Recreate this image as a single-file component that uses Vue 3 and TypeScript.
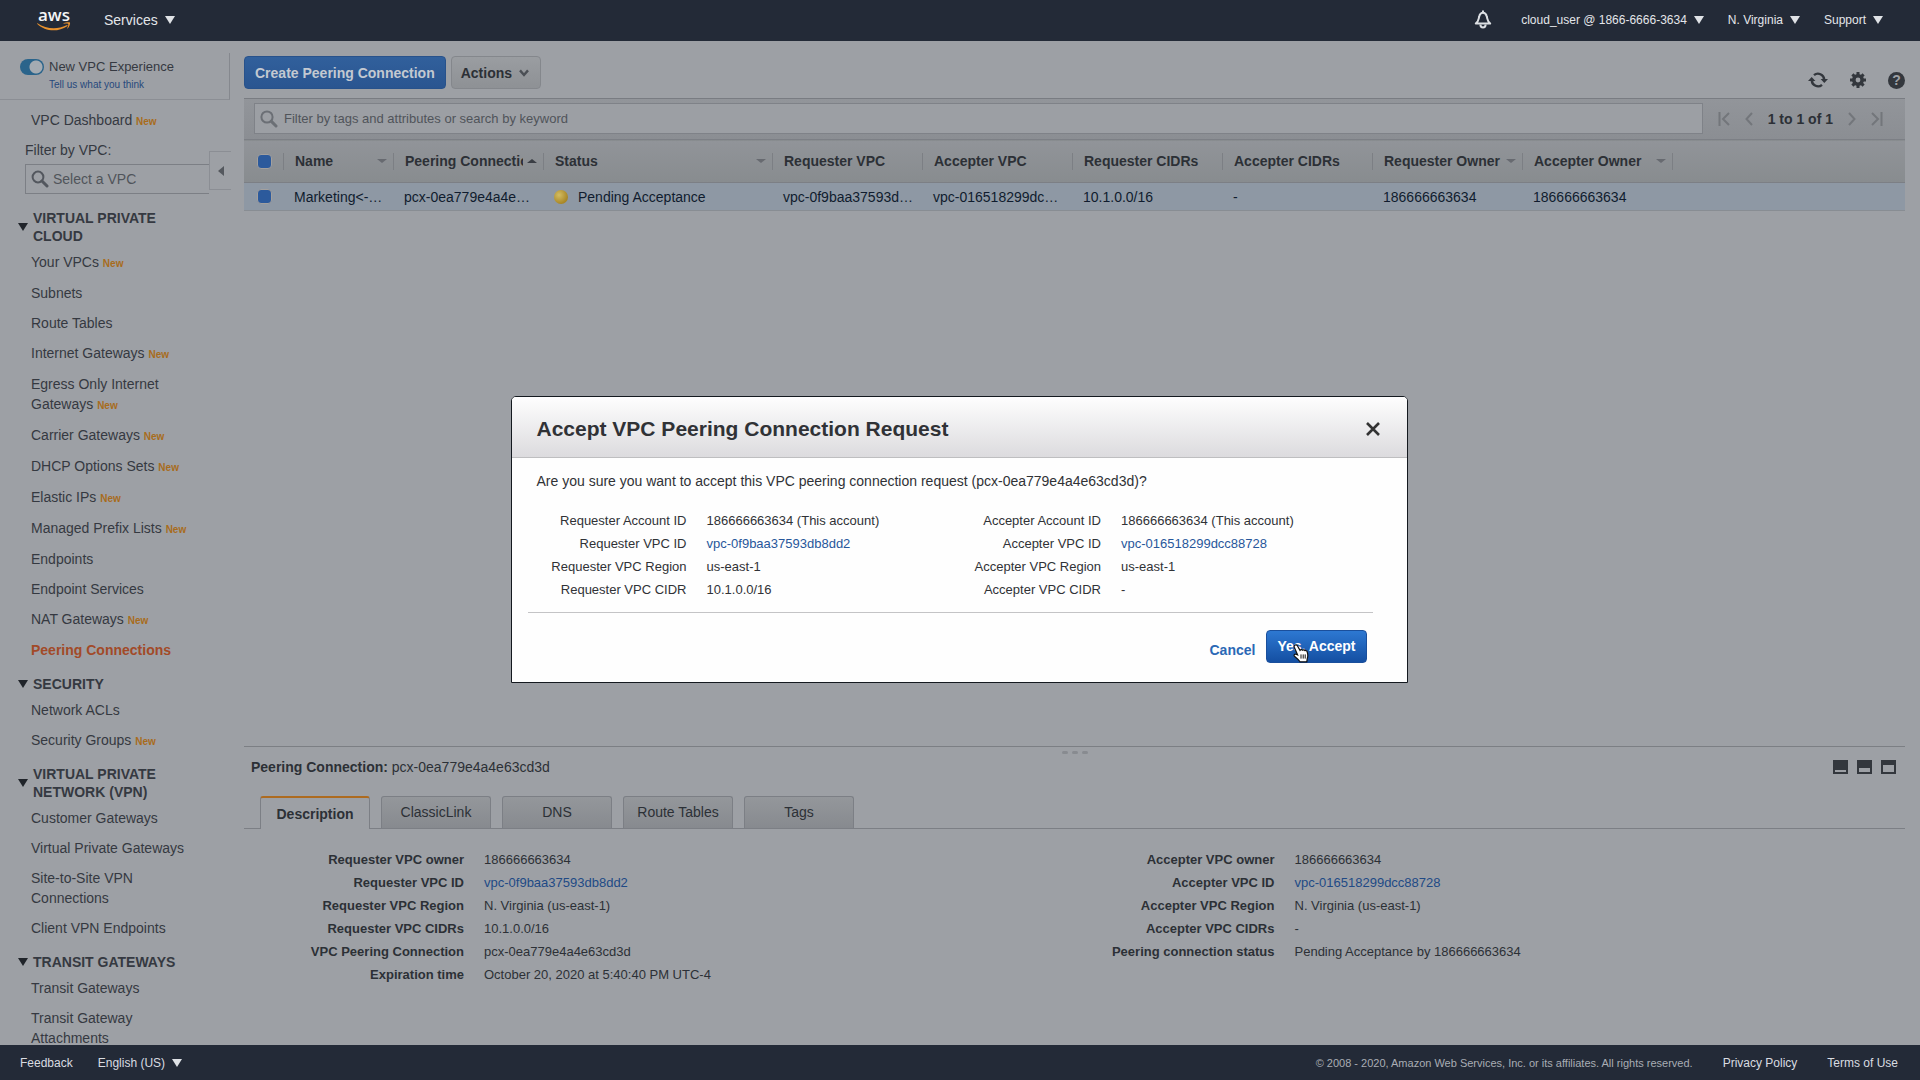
<script setup lang="ts">
import { ref } from 'vue'

interface NavItem {
  label: string
  isNew?: boolean
  active?: boolean
}

interface NavGroup {
  title: string
  items: NavItem[]
}

interface Field {
  label: string
  value: string
  link?: boolean
}

interface Column {
  title: string
  width: number
  sort?: 'up' | 'down'
}

const navGroups: NavGroup[] = [
  {
    title: 'VIRTUAL PRIVATE CLOUD',
    items: [
      { label: 'Your VPCs', isNew: true },
      { label: 'Subnets' },
      { label: 'Route Tables' },
      { label: 'Internet Gateways', isNew: true },
      { label: 'Egress Only Internet Gateways', isNew: true },
      { label: 'Carrier Gateways', isNew: true },
      { label: 'DHCP Options Sets', isNew: true },
      { label: 'Elastic IPs', isNew: true },
      { label: 'Managed Prefix Lists', isNew: true },
      { label: 'Endpoints' },
      { label: 'Endpoint Services' },
      { label: 'NAT Gateways', isNew: true },
      { label: 'Peering Connections', active: true },
    ],
  },
  {
    title: 'SECURITY',
    items: [{ label: 'Network ACLs' }, { label: 'Security Groups', isNew: true }],
  },
  {
    title: 'VIRTUAL PRIVATE NETWORK (VPN)',
    items: [
      { label: 'Customer Gateways' },
      { label: 'Virtual Private Gateways' },
      { label: 'Site-to-Site VPN Connections' },
      { label: 'Client VPN Endpoints' },
    ],
  },
  {
    title: 'TRANSIT GATEWAYS',
    items: [{ label: 'Transit Gateways' }, { label: 'Transit Gateway Attachments' }],
  },
]

const columns: Column[] = [
  { title: 'Name', width: 110, sort: 'down' },
  { title: 'Peering Connection', width: 150, sort: 'up' },
  { title: 'Status', width: 229, sort: 'down' },
  { title: 'Requester VPC', width: 150 },
  { title: 'Accepter VPC', width: 150 },
  { title: 'Requester CIDRs', width: 150 },
  { title: 'Accepter CIDRs', width: 150 },
  { title: 'Requester Owner', width: 150, sort: 'down' },
  { title: 'Accepter Owner', width: 150, sort: 'down' },
]

const tabs = ['Description', 'ClassicLink', 'DNS', 'Route Tables', 'Tags']
const activeTab = ref('Description')

const detailColumns: Field[][] = [
  [
    { label: 'Requester VPC owner', value: '186666663634' },
    { label: 'Requester VPC ID', value: 'vpc-0f9baa37593db8dd2', link: true },
    { label: 'Requester VPC Region', value: 'N. Virginia (us-east-1)' },
    { label: 'Requester VPC CIDRs', value: '10.1.0.0/16' },
    { label: 'VPC Peering Connection', value: 'pcx-0ea779e4a4e63cd3d' },
    { label: 'Expiration time', value: 'October 20, 2020 at 5:40:40 PM UTC-4' },
  ],
  [
    { label: 'Accepter VPC owner', value: '186666663634' },
    { label: 'Accepter VPC ID', value: 'vpc-016518299dcc88728', link: true },
    { label: 'Accepter VPC Region', value: 'N. Virginia (us-east-1)' },
    { label: 'Accepter VPC CIDRs', value: '-' },
    { label: 'Peering connection status', value: 'Pending Acceptance by 186666663634' },
  ],
]

const requestColumns: Field[][] = [
  [
    { label: 'Requester Account ID', value: '186666663634 (This account)' },
    { label: 'Requester VPC ID', value: 'vpc-0f9baa37593db8dd2', link: true },
    { label: 'Requester VPC Region', value: 'us-east-1' },
    { label: 'Requester VPC CIDR', value: '10.1.0.0/16' },
  ],
  [
    { label: 'Accepter Account ID', value: '186666663634 (This account)' },
    { label: 'Accepter VPC ID', value: 'vpc-016518299dcc88728', link: true },
    { label: 'Accepter VPC Region', value: 'us-east-1' },
    { label: 'Accepter VPC CIDR', value: '-' },
  ],
]

const newExperience = ref(true)
const allSelected = ref(true)
const rowSelected = ref(true)
</script>

<template>
  <div class="console">
    <header class="topbar">
      <a class="logo" href="#" aria-label="AWS home">
        <span class="logo-text">aws</span>
        <svg class="logo-smile" width="34" height="9" viewBox="0 0 34 9" aria-hidden="true">
          <path d="M0.5 1.2 C9 7 20 8 29.6 3.2 C30.6 2.8 31 3.6 30.2 4.2 C21 10.4 8 9.6 0.3 2 C0 1.4 0.2 1 0.5 1.2Z" fill="#e8912d" />
          <path d="M26.6 1.2 C29 0 32.6 0 33 0.6 C33.4 1.4 32.6 4.6 30.8 6.4 C30.4 6.7 30.2 6.5 30.3 6.1 C31 4.3 31.6 2.6 31.2 2 C30.8 1.4 28.6 1.6 26.8 1.8 C26.4 1.8 26.2 1.5 26.6 1.2Z" fill="#e8912d" />
        </svg>
      </a>
      <button class="menu services" type="button">Services<span class="caret"></span></button>
      <nav class="account" aria-label="Account">
        <button class="bell" type="button" aria-label="Notifications">
          <svg width="18" height="19" viewBox="0 0 18 19" aria-hidden="true">
            <path d="M9 1.2 V2.6 M1.8 13.6 C5 10.8 4.4 9.4 5.2 6.6 C5.8 4 7 2.8 9 2.8 C11 2.8 12.2 4 12.8 6.6 C13.6 9.4 13 10.8 16.2 13.6Z" fill="none" stroke="#dcdfe3" stroke-width="2" stroke-linejoin="round" stroke-linecap="round" />
            <path d="M6.4 14.4 C6.4 18.4 11.6 18.4 11.6 14.4" fill="none" stroke="#dcdfe3" stroke-width="2" />
          </svg>
        </button>
        <button class="menu" type="button">cloud_user @ 1866-6666-3634<span class="caret"></span></button>
        <button class="menu" type="button">N. Virginia<span class="caret"></span></button>
        <button class="menu" type="button">Support<span class="caret"></span></button>
      </nav>
    </header>

    <div class="body">
      <aside class="sidebar">
        <div class="experience">
          <input id="new-experience" v-model="newExperience" class="toggle" type="checkbox" role="switch" />
          <div class="experience-text">
            <label for="new-experience">New VPC Experience</label>
            <a class="feedback-link" href="#">Tell us what you think</a>
          </div>
        </div>
        <a class="nav-item dashboard" href="#">VPC Dashboard <em>New</em></a>
        <div class="filter-row">
          <div class="vpc-filter">
            <label for="vpc-filter">Filter by VPC:</label>
            <div class="vpc-input">
              <svg width="18" height="18" viewBox="0 0 18 18" aria-hidden="true">
                <circle cx="7" cy="7" r="5.4" fill="none" stroke="#53575e" stroke-width="2" />
                <path d="M11 11 L16 16" stroke="#53575e" stroke-width="3" stroke-linecap="round" />
              </svg>
              <input id="vpc-filter" type="text" placeholder="Select a VPC" />
            </div>
          </div>
          <button class="collapse" type="button" aria-label="Collapse menu"><span></span></button>
        </div>
        <section v-for="group in navGroups" :key="group.title" class="group">
          <h2><span class="twisty"></span>{{ group.title }}</h2>
          <a
            v-for="item in group.items"
            :key="item.label"
            href="#"
            class="nav-item"
            :class="{ badged: item.isNew, active: item.active }"
          >{{ item.label }} <em v-if="item.isNew">New</em></a>
        </section>
      </aside>

      <main class="content">
        <div class="actions">
          <button class="primary" type="button">Create Peering Connection</button>
          <button class="secondary" type="button">
            Actions
            <svg width="10" height="8" viewBox="0 0 10 8" aria-hidden="true">
              <path d="M1 1.4 L5 6 L9 1.4" fill="none" stroke="#4b4f55" stroke-width="2.4" />
            </svg>
          </button>
          <div class="tools">
            <button type="button" aria-label="Refresh">
              <svg width="20" height="18" viewBox="0 0 20 18" aria-hidden="true">
                <path d="M6 4.2 A6.2 6.2 0 0 1 16.2 8.6 M14 13.8 A6.2 6.2 0 0 1 3.8 9.4" fill="none" stroke="#33373d" stroke-width="2.4" />
                <path d="M12.6 8 H20 L16.3 12Z M0 10 H7.4 L3.7 6Z" fill="#33373d" />
              </svg>
            </button>
            <button type="button" aria-label="Settings">
              <svg width="16" height="16" viewBox="0 0 16 16" aria-hidden="true">
                <circle cx="8" cy="8" r="4.2" fill="none" stroke="#33373d" stroke-width="3.6" />
                <path d="M8 0 V3 M8 13 V16 M0 8 H3 M13 8 H16 M2.4 2.4 L4.4 4.4 M11.6 11.6 L13.6 13.6 M2.4 13.6 L4.4 11.6 M11.6 4.4 L13.6 2.4" stroke="#33373d" stroke-width="3" />
              </svg>
            </button>
            <button class="help" type="button" aria-label="Help">?</button>
          </div>
        </div>

        <div class="grid">
          <div class="search-row">
            <div class="search">
              <svg width="18" height="18" viewBox="0 0 18 18" aria-hidden="true">
                <circle cx="7" cy="7" r="5.6" fill="none" stroke="#6b6f75" stroke-width="2" />
                <path d="M11.4 11.4 L16 16" stroke="#6b6f75" stroke-width="3" stroke-linecap="round" />
              </svg>
              <input type="text" aria-label="Filter connections" placeholder="Filter by tags and attributes or search by keyword" />
            </div>
            <div class="pager">
              <button type="button" aria-label="First page">
                <svg width="12" height="14" viewBox="0 0 12 14"><path d="M1.5 0 V14 M11 1 L5 7 L11 13" /></svg>
              </button>
              <button type="button" aria-label="Previous page">
                <svg width="8" height="14" viewBox="0 0 8 14"><path d="M7 1 L1.5 7 L7 13" /></svg>
              </button>
              <strong>1 to 1 of 1</strong>
              <button type="button" aria-label="Next page">
                <svg width="8" height="14" viewBox="0 0 8 14"><path d="M1 1 L6.5 7 L1 13" /></svg>
              </button>
              <button type="button" aria-label="Last page">
                <svg width="12" height="14" viewBox="0 0 12 14"><path d="M1 1 L7 7 L1 13 M10.5 0 V14" /></svg>
              </button>
            </div>
          </div>

          <table>
            <colgroup>
              <col style="width: 40px" />
              <col v-for="c in columns" :key="c.title" :style="{ width: c.width + 'px' }" />
              <col />
            </colgroup>
            <thead>
              <tr>
                <th scope="col">
                  <div class="head check"><input v-model="allSelected" type="checkbox" aria-label="Select all" /></div>
                </th>
                <th v-for="c in columns" :key="c.title" scope="col">
                  <div class="head">
                    <span class="head-text">{{ c.title }}</span>
                    <span v-if="c.sort" class="sort" :class="c.sort"></span>
                  </div>
                </th>
                <th></th>
              </tr>
            </thead>
            <tbody>
              <tr>
                <td class="check"><input v-model="rowSelected" type="checkbox" aria-label="Select connection" /></td>
                <td>Marketing&lt;-…</td>
                <td>pcx-0ea779e4a4e…</td>
                <td><span class="ball"></span>Pending Acceptance</td>
                <td>vpc-0f9baa37593d…</td>
                <td>vpc-016518299dc…</td>
                <td>10.1.0.0/16</td>
                <td>-</td>
                <td>186666663634</td>
                <td>186666663634</td>
                <td></td>
              </tr>
            </tbody>
          </table>
        </div>

        <section class="details">
          <div class="grip"><i></i><i></i><i></i></div>
          <div class="details-title">
            <p><strong>Peering Connection:</strong> pcx-0ea779e4a4e63cd3d</p>
            <div class="layouts">
              <button v-for="n in 3" :key="n" type="button" :class="'size-' + n" :aria-label="'Panel size ' + n"><span></span></button>
            </div>
          </div>
          <div class="tabs" role="tablist">
            <button
              v-for="tab in tabs"
              :key="tab"
              type="button"
              role="tab"
              :aria-selected="activeTab === tab"
              :class="{ selected: activeTab === tab }"
              @click="activeTab = tab"
            >{{ tab }}</button>
          </div>
          <div class="fields">
            <dl v-for="(fields, i) in detailColumns" :key="i">
              <div v-for="f in fields" :key="f.label">
                <dt>{{ f.label }}</dt>
                <dd><a v-if="f.link" href="#">{{ f.value }}</a><template v-else>{{ f.value }}</template></dd>
              </div>
            </dl>
          </div>
        </section>
      </main>
    </div>

    <footer class="footer">
      <a href="#">Feedback</a>
      <button class="menu" type="button">English (US)<span class="caret"></span></button>
      <span class="copyright">© 2008 - 2020, Amazon Web Services, Inc. or its affiliates. All rights reserved.</span>
      <a href="#">Privacy Policy</a>
      <a href="#">Terms of Use</a>
    </footer>

    <div class="backdrop">
      <div class="dialog" role="dialog" aria-modal="true" aria-labelledby="dialog-title">
        <div class="dialog-head">
          <h1 id="dialog-title">Accept VPC Peering Connection Request</h1>
          <button type="button" aria-label="Close">
            <svg width="16" height="16" viewBox="0 0 16 16" aria-hidden="true">
              <path d="M2 2 L14 14 M14 2 L2 14" stroke="#333" stroke-width="2.6" />
            </svg>
          </button>
        </div>
        <p class="question">Are you sure you want to accept this VPC peering connection request (pcx-0ea779e4a4e63cd3d)?</p>
        <div class="request">
          <dl v-for="(fields, i) in requestColumns" :key="i">
            <div v-for="f in fields" :key="f.label">
              <dt>{{ f.label }}</dt>
              <dd><a v-if="f.link" href="#">{{ f.value }}</a><template v-else>{{ f.value }}</template></dd>
            </div>
          </dl>
        </div>
        <div class="dialog-actions">
          <button class="cancel" type="button">Cancel</button>
          <button class="accept" type="button">
            Yes, Accept
            <svg class="pointer" width="16" height="19" viewBox="0 0 16 19" aria-hidden="true">
              <path d="M1.6 1.4 C2.6 0.6 3.8 0.8 4.4 1.8 L7 6.4 C7.6 5.6 8.8 5.4 9.5 6.2 C10.2 5.6 11.3 5.8 11.9 6.6 C12.9 6.2 13.9 6.8 14.2 7.8 C14.9 10.2 15.2 12.4 14.2 14.8 L13.8 17.8 H7 C5.6 15.4 3.6 14 1.4 12.2 C0.6 11.2 1.6 9.9 2.9 10.3 L4.6 11 L1.3 3.2 C1 2.4 1.1 1.8 1.6 1.4Z" fill="#fff" stroke="#111" stroke-width="1.2" />
              <path d="M8 10.4 V14.6 M10.2 10.4 V14.6 M12.2 10.4 V14.6" stroke="#111" stroke-width="1" />
            </svg>
          </button>
        </div>
      </div>
    </div>
  </div>
</template>

<style>
body {
  margin: 0;
  background: #9da0a5;
}
</style>

<style scoped>
* {
  box-sizing: border-box;
}

.console {
  display: flex;
  flex-direction: column;
  height: 100vh;
  overflow: hidden;
  background: #9da0a5;
  color: #2c3036;
  font: 14px/20px "Liberation Sans", Arial, sans-serif;
}

button,
input {
  font: inherit;
  color: inherit;
}

button {
  padding: 0;
  border: 0;
  background: none;
}

a {
  text-decoration: none;
  color: inherit;
}

h1,
h2,
p,
dl,
dd {
  margin: 0;
}

svg {
  display: block;
  flex: none;
}

/* Top bar */
.topbar {
  flex: none;
  display: flex;
  align-items: center;
  height: 41px;
  padding: 0 37px 2px;
  background: #232a37;
  color: #e3e6ea;
}

.logo {
  display: flex;
  flex-direction: column;
  align-items: center;
  width: 34px;
}

.logo-text {
  height: 14px;
  color: #f4f5f6;
  font: 600 17px/13px "Open Sans", sans-serif;
}

.menu {
  display: flex;
  align-items: center;
  gap: 7px;
  font-size: 12px;
}

.services {
  margin-left: 33px;
  font-size: 14px;
}

.caret {
  border: 5px solid transparent;
  border-top: 8px solid #dfe2e6;
  border-bottom: 0;
}

.account {
  display: flex;
  align-items: center;
  gap: 24px;
  margin-left: auto;
}

.bell {
  margin-right: 5px;
}

/* Sidebar */
.body {
  flex: 1;
  display: flex;
  min-height: 0;
}

.sidebar {
  flex: none;
  width: 244px;
  padding-top: 12px;
  overflow: hidden;
  color: #353941;
}

.experience {
  display: flex;
  gap: 5px;
  width: 230px;
  height: 47px;
  padding: 5px 0 0 20px;
  border-right: 1px solid #85888e;
  border-bottom: 1px solid #8b8e94;
}

.toggle {
  appearance: none;
  width: 24px;
  height: 16px;
  margin: 1px 0 0;
  border-radius: 8px;
  background: radial-gradient(circle at 16px 8px, #a4abb2 6px, transparent 7px) #2a648b;
}

.experience-text {
  display: flex;
  flex-direction: column;
  font-size: 13px;
  line-height: 18px;
}

.feedback-link {
  color: #27497c;
  font-size: 10px;
}

.nav-item {
  display: block;
  width: 210px;
  margin-bottom: 10px;
  padding: 0 14px 0 31px;
}

.nav-item em {
  color: #a86c1c;
  font-size: 10px;
  font-style: normal;
  font-weight: bold;
  line-height: 10px;
}

.nav-item.badged {
  margin-bottom: 11px;
}

.nav-item.active {
  color: #a24a28;
  font-weight: bold;
}

.dashboard {
  margin-top: 10px;
}

.filter-row {
  display: flex;
  align-items: flex-end;
}

.vpc-filter {
  width: 209px;
  padding-left: 25px;
}

.vpc-filter label {
  display: block;
}

.vpc-input {
  display: flex;
  align-items: center;
  gap: 4px;
  height: 30px;
  margin-top: 4px;
  padding-left: 5px;
  border: 1px solid #7c7f85;
  border-right: 0;
}

.vpc-input input {
  width: 150px;
  padding: 0;
  border: 0;
  outline: 0;
  background: none;
}

input::placeholder {
  color: #50545a;
  opacity: 1;
}

.collapse {
  display: grid;
  place-items: center;
  width: 22px;
  height: 39px;
  margin-bottom: 4px;
  border: 1px solid #8b8e94;
  border-right: 0;
}

.collapse span {
  border: 5px solid transparent;
  border-right: 6px solid #54585e;
  border-left: 0;
}

.group h2 {
  display: flex;
  align-items: center;
  gap: 5px;
  width: 200px;
  margin: 15px 0 7px;
  padding: 0 10px 0 18px;
  font-size: 14px;
  line-height: 18px;
}

.twisty {
  flex: none;
  border: 5px solid transparent;
  border-top: 8px solid #20242a;
  border-bottom: 0;
}

/* Main area */
.content {
  flex: 1;
  display: flex;
  flex-direction: column;
  min-width: 0;
  padding-right: 15px;
}

.actions {
  display: flex;
  align-items: flex-end;
  gap: 5px;
  height: 57px;
  padding-bottom: 9px;
}

.primary,
.secondary {
  height: 33px;
  border-radius: 4px;
  font-weight: bold;
}

.primary {
  padding: 0 10px;
  border: 1px solid #28528b;
  background: linear-gradient(#31609c, #2a5590);
  color: #c3c9d1;
}

.secondary {
  display: flex;
  align-items: center;
  gap: 7px;
  padding: 0 11px 0 9px;
  border: 1px solid #84878c;
  background: linear-gradient(#9a9da1, #8e9195);
}

.tools {
  display: flex;
  align-items: center;
  gap: 22px;
  margin-left: auto;
}

.help {
  width: 17px;
  height: 17px;
  border-radius: 9px;
  background: #33373d;
  color: #9da0a5;
  font-size: 14px;
  font-weight: bold;
  line-height: 17px;
}

.grid {
  flex: 1;
}

.search-row {
  display: flex;
  height: 41px;
  padding: 4px 0 0 10px;
  border-top: 1px solid #797c82;
  background: linear-gradient(#92959a, #8b8e93);
}

.search {
  flex: 1;
  display: flex;
  align-items: center;
  gap: 6px;
  height: 31px;
  padding-left: 5px;
  border: 1px solid #7f8288;
  background: #9c9fa4;
}

.search input {
  flex: 1;
  padding: 0;
  border: 0;
  outline: 0;
  background: none;
  font-size: 13px;
}

.pager {
  display: flex;
  align-items: center;
  gap: 15px;
  height: 31px;
  padding: 0 22px 0 15px;
}

.pager path {
  fill: none;
  stroke: #73767b;
  stroke-width: 2;
}

table {
  width: 100%;
  border-collapse: collapse;
  table-layout: fixed;
}

th,
td {
  padding: 0;
  overflow: hidden;
  text-align: left;
  white-space: nowrap;
}

thead tr {
  height: 43px;
  border-top: 1px solid #7c7f85;
  border-bottom: 1px solid #7c7f85;
  background: linear-gradient(#919499, #888c8f);
}

.head {
  display: flex;
  align-items: center;
  gap: 4px;
  height: 17px;
  padding: 0 6px 0 11px;
  border-right: 1px solid #7c7f84;
}

.head-text {
  flex: 1;
  overflow: hidden;
}

.head.check,
td.check {
  padding-left: 13px;
}

.sort {
  width: 10px;
  border: 4px solid transparent;
  border-right-width: 5px;
  border-left-width: 5px;
}

.sort.down {
  border-top-color: #676a70;
  border-bottom: 0;
}

.sort.up {
  border-top: 0;
  border-bottom-color: #3a3e44;
}

tbody tr {
  height: 28px;
  border-bottom: 1px solid #888d93;
  background: #8e98a4;
  color: #101c2e;
}

td {
  padding-left: 10px;
}

table input {
  appearance: none;
  display: block;
  width: 15px;
  height: 15px;
  margin: 0;
  border: 1px solid #a3a09e;
  border-radius: 4px;
  background: #2c5a9c;
}

.ball {
  display: inline-block;
  width: 14px;
  height: 14px;
  margin-right: 10px;
  border-radius: 7px;
  background: radial-gradient(circle at 5px 5px, #d3bd62, #a88625 9px);
  vertical-align: -2px;
}

/* Details panel */
.details {
  flex: none;
  height: 299px;
  border-top: 1px solid #7c7f84;
}

.grip {
  display: flex;
  justify-content: center;
  gap: 4px;
  height: 10px;
  padding-top: 4px;
}

.grip i {
  width: 6px;
  height: 3px;
  border-radius: 2px;
  background: #888b90;
}

.details-title {
  display: flex;
  align-items: center;
  justify-content: space-between;
  height: 20px;
  padding: 0 9px 0 7px;
}

.layouts {
  display: flex;
  gap: 9px;
}

.layouts button {
  display: flex;
  align-items: flex-end;
  width: 15px;
  height: 14px;
  padding: 2px;
  background: #33373d;
}

.layouts span {
  width: 11px;
  height: 2px;
  background: #9da0a5;
}

.layouts .size-2 span {
  height: 4px;
}

.layouts .size-3 span {
  height: 7px;
}

.tabs {
  display: flex;
  align-items: flex-end;
  gap: 11px;
  height: 52px;
  padding-left: 16px;
  border-bottom: 1px solid #7c7f85;
}

.tabs button {
  width: 110px;
  height: 32px;
  padding-bottom: 2px;
  border: 1px solid #7c7f85;
  border-bottom: 0;
  border-radius: 3px 3px 0 0;
  background: linear-gradient(#94979b, #878a8f);
}

.tabs .selected {
  height: 33px;
  margin-bottom: -1px;
  padding: 0;
  border-top: 2px solid #ad6b20;
  background: #9da0a5;
  font-weight: bold;
}

.fields {
  display: flex;
  padding: 19px 40px 0 0;
}

.fields dl,
.request dl {
  flex: 1;
}

dl div {
  display: flex;
  font-size: 13px;
  line-height: 23px;
}

dt {
  flex: none;
  text-align: right;
}

.fields dt {
  width: 220px;
  margin-right: 20px;
  font-weight: bold;
}

.fields a {
  color: #214a85;
}

/* Footer */
.footer {
  flex: none;
  display: flex;
  align-items: center;
  height: 35px;
  padding: 0 22px 0 20px;
  gap: 30px;
  background: #232a37;
  color: #d9dce1;
  font-size: 12px;
}

.footer .menu {
  margin-left: -5px;
}

.copyright {
  margin-left: auto;
  color: #a9adb4;
  font-size: 11px;
}

/* Confirmation dialog */
.backdrop {
  position: fixed;
  inset: 0;
  display: grid;
  place-items: center;
  padding: 0 2px 2px 0;
}

.dialog {
  width: min(897px, 94vw);
  border: 1px solid #14191f;
  border-radius: 5px 5px 0 0;
  background: #fefefe;
  color: #303236;
}

.dialog-head {
  display: flex;
  align-items: center;
  justify-content: space-between;
  height: 61px;
  padding: 4px 26px 0 25px;
  border-bottom: 1px solid #bebec0;
  border-radius: 4px 4px 0 0;
  background: linear-gradient(#fefefe, #dcdbde);
}

h1 {
  font-size: 21px;
  line-height: 28px;
}

.question {
  padding: 13px 25px 0;
}

.request {
  display: flex;
  margin: 18px 34px 0 16px;
  padding-bottom: 11px;
  border-bottom: 1px solid #c4c4c6;
}

.request dt {
  width: 159px;
  margin-right: 20px;
}

.request dl + dl dt {
  width: 151px;
}

.request a {
  color: #28579b;
}

.dialog-actions {
  display: flex;
  align-items: center;
  justify-content: flex-end;
  gap: 11px;
  padding: 17px 40px 19px;
  font-weight: bold;
}

.cancel {
  padding-top: 8px;
  color: #2a68b5;
}

.accept {
  position: relative;
  height: 33px;
  padding: 0 10px;
  border: 1px solid #1a4f9c;
  border-radius: 4px;
  background: linear-gradient(#2d78d2, #144fa2);
  color: #fff;
}

.pointer {
  position: absolute;
  top: 13px;
  left: 26px;
}
</style>
